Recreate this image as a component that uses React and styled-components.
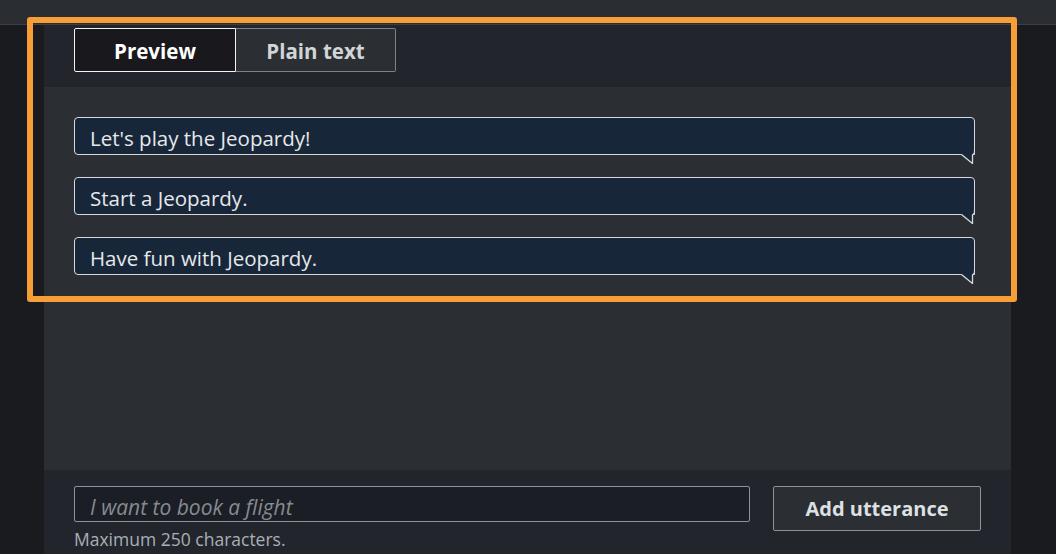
import styled, {createGlobalStyle} from "styled-components";

const GlobalStyle = createGlobalStyle`
  html, body {
    margin: 0;
    padding: 0;
    background: #1a1b1f;
    font-family: "Open Sans", "Liberation Sans", sans-serif;
    overflow: hidden;
  }
`

const utterances = [
    "Let's play the Jeopardy!",
    "Start a Jeopardy.",
    "Have fun with Jeopardy.",
]

const Page = styled.div`
  position: relative;
  width: 1056px;
  height: 554px;
  display: flex;
  flex-direction: column;
  background: #1a1b1f;
`

const TopBar = styled.div`
  height: 24px;
  background: #2a2d32;
  border-bottom: 1px solid #3c3f45;
`

const Main = styled.div`
  flex: 1;
  display: flex;
`

const Side = styled.div`
  width: ${({$w}) => $w}px;
  background: #1a1b1f;
`

const Panel = styled.div`
  width: 967px;
  display: flex;
  flex-direction: column;
`

const Header = styled.div`
  height: 59px;
  padding: 3px 0 0 30px;
  background: #22252c;
`

const Tabs = styled.div`
  display: flex;
`

const Tab = styled.button`
  width: ${({$active}) => $active ? 162 : 160}px;
  height: 44px;
  box-sizing: border-box;
  border: 1px solid ${({$active}) => $active ? "#f2f3f3" : "#7d8489"};
  border-left-width: ${({$active}) => $active ? 1 : 0}px;
  border-radius: ${({$active}) => $active ? "2px 0 0 2px" : "0 2px 2px 0"};
  background: ${({$active}) => $active ? "#19191d" : "#2b2e33"};
  color: ${({$active}) => $active ? "#ffffff" : "#d1d5d8"};
  font-family: "Open Sans", sans-serif;
  font-weight: 700;
  font-size: 20.5px;
  padding: 1px 0 0;
`

const Body = styled.div`
  height: 353px;
  padding-top: 30px;
  background: #2b2e33;
  display: flex;
  flex-direction: column;
  gap: 22px;
`

const Bubble = styled.div`
  position: relative;
  margin-left: 30px;
  width: 901px;
  height: 38px;
  box-sizing: border-box;
  border: 1px solid #d6d9dc;
  border-radius: 4px 4px 0 4px;
  background: #182639;
  color: #e6e9eb;
  font-size: 20.5px;
  line-height: 33px;
  padding: 4px 0 0 15px;

  svg {
    position: absolute;
    right: -1px;
    bottom: -10px;
  }
`

const Footer = styled.div`
  flex: 1;
  background: #22252c;
  padding: 16px 0 0 30px;
  display: flex;
  gap: 23px;
`

const Field = styled.div`
  display: flex;
  flex-direction: column;
  gap: 7px;
`

const Input = styled.input`
  width: 676px;
  height: 36px;
  box-sizing: border-box;
  border: 1px solid #8d9399;
  border-radius: 2px;
  background: #1b1e24;
  color: #e9ebed;
  font-family: "Open Sans", sans-serif;
  font-size: 21px;
  padding: 5px 0 0 15px;
  outline: none;

  &::placeholder {
    color: #848b92;
    font-style: italic;
  }
`

const Hint = styled.div`
  color: #a9b0b6;
  font-size: 17.5px;
  line-height: 20px;
`

const AddButton = styled.button`
  width: 208px;
  height: 45px;
  box-sizing: border-box;
  border: 1px solid #8d9399;
  border-radius: 2px;
  background: #2b2e33;
  color: #dde1e3;
  font-family: "Open Sans", sans-serif;
  font-weight: 700;
  font-size: 20px;
  padding: 0;
`

const Highlight = styled.div`
  position: absolute;
  left: 27px;
  top: 17px;
  width: 990px;
  height: 285px;
  box-sizing: border-box;
  border: 6px solid #f89e37;
  border-radius: 3px;
  pointer-events: none;
`

const Tail = () => (
    <svg width="14" height="14" viewBox="0 0 14 14">
        <path d="M0 0 H13 V3 L11.5 5 V13 L0.5 4.5 Z" fill="#182639"/>
        <path d="M13.5 0 V3 L11.5 5 V13.5 L0.5 4.5" fill="none" stroke="#d6d9dc" strokeWidth="1.3"/>
    </svg>
)

export default function App() {
    return (
        <Page>
            <GlobalStyle/>
            <TopBar/>
            <Main>
                <Side $w={44}/>
                <Panel>
                    <Header>
                        <Tabs>
                            <Tab $active>Preview</Tab>
                            <Tab>Plain text</Tab>
                        </Tabs>
                    </Header>
                    <Body>
                        {utterances.map(text => (
                            <Bubble key={text}>
                                {text}
                                <Tail/>
                            </Bubble>
                        ))}
                    </Body>
                    <Footer>
                        <Field>
                            <Input placeholder="I want to book a flight"/>
                            <Hint>Maximum 250 characters.</Hint>
                        </Field>
                        <AddButton>Add utterance</AddButton>
                    </Footer>
                </Panel>
                <Side $w={45}/>
            </Main>
            <Highlight/>
        </Page>
    )
}
